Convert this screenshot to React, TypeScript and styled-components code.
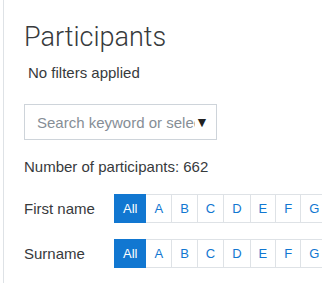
import styled, { createGlobalStyle } from 'styled-components';

const GlobalStyle = createGlobalStyle`
    html, body {
        margin: 0;
        padding: 0;
        background: #fff;
    }
    body {
        font-family: "Liberation Sans", Arial, sans-serif;
        font-size: 15px;
        color: #373a3c;
    }
`;

const letters = ['A', 'B', 'C', 'D', 'E', 'F', 'G'];

const Region = styled.main`
    margin-left: 3px;
    border-left: 1px solid #dee2e6;
    padding: 21px 0 0 20px;
    min-height: 283px;
    box-sizing: border-box;
    overflow: hidden;
`;

const Heading = styled.h2`
    margin: 0;
    font-family: Roboto, "Liberation Sans", sans-serif;
    font-weight: 300;
    font-size: 27px;
    line-height: 32px;
    color: #373a3c;
`;

const FilterNote = styled.div`
    padding-left: 4px;
    margin-top: 9px;
    line-height: 22px;
`;

const SearchWrap = styled.div`
    display: flex;
    align-items: center;
    margin-top: 20px;
`;

const SearchInput = styled.input`
    width: 193px;
    height: 36px;
    box-sizing: border-box;
    border: 1px solid #ced4da;
    border-radius: 0;
    padding: 0 12px;
    font-family: inherit;
    font-size: 15px;
    color: #495057;
    &::placeholder {
        color: #868e96;
    }
`;

const Caret = styled.span`
    margin-left: -22px;
    font-size: 14px;
    color: #222;
    background: #fff;
    line-height: 1;
`;

const Count = styled.div`
    margin-top: 16px;
    line-height: 22px;
`;

const InitialsRow = styled.div<{ $first?: boolean }>`
    display: flex;
    align-items: center;
    margin-top: 16px;
    white-space: nowrap;
`;

const RowLabel = styled.span`
    width: 90px;
    flex-shrink: 0;
`;

const Pager = styled.ul`
    display: flex;
    list-style: none;
    margin: 0;
    padding: 0;
`;

const PageLink = styled.li<{ $active?: boolean }>`
    font-size: 13px;
    line-height: 19px;
    padding: 4px 8px;
    margin-left: -1px;
    border: 1px solid ${(p) => (p.$active ? '#1177d1' : '#dee2e6')};
    background: ${(p) => (p.$active ? '#1177d1' : '#fff')};
    color: ${(p) => (p.$active ? '#fff' : '#1177d1')};
    position: relative;
    z-index: ${(p) => (p.$active ? 1 : 0)};
    &:first-child {
        margin-left: 0;
    }
`;

const Initials = ({ label }: { label: string }) => (
    <InitialsRow>
        <RowLabel>{label}</RowLabel>
        <Pager>
            <PageLink $active>All</PageLink>
            {letters.map((l) => (
                <PageLink key={l}>{l}</PageLink>
            ))}
        </Pager>
    </InitialsRow>
);

export default function App() {
    return (
        <>
            <GlobalStyle />
            <Region>
                <Heading>Participants</Heading>
                <FilterNote>No filters applied</FilterNote>
                <SearchWrap>
                    <SearchInput placeholder="Search keyword or select filter" />
                    <Caret>▼</Caret>
                </SearchWrap>
                <Count>Number of participants: 662</Count>
                <Initials label="First name" />
                <Initials label="Surname" />
            </Region>
        </>
    );
}
